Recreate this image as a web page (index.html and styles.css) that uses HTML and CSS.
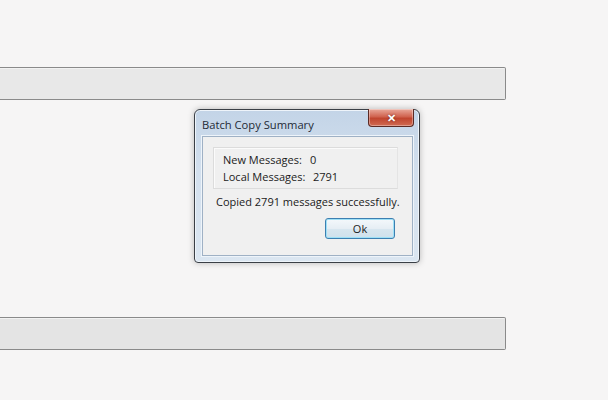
FILE: index.html
```html
<!DOCTYPE html>
<html lang="en">
<head>
    <meta charset="UTF-8">
    <title>Batch Copy Summary</title>
    <link rel="stylesheet" href="styles.css">
</head>
<body>

<div class="page">
    <div class="bar bar-top"></div>
    <div class="bar bar-bottom"></div>
</div>

<div class="window">
    <div class="titlebar">
        <span class="title">Batch Copy Summary</span>
        <button class="close-btn" type="button">&#x2715;</button>
    </div>
    <div class="client">
        <div class="groupbox">
            <div class="stat-row">
                <span class="stat-label">New Messages:</span>
                <span class="stat-value">0</span>
            </div>
            <div class="stat-row">
                <span class="stat-label">Local Messages:</span>
                <span class="stat-value">2791</span>
            </div>
        </div>
        <p class="result">Copied 2791 messages successfully.</p>
        <div class="actions">
            <button class="ok-btn" type="button">Ok</button>
        </div>
    </div>
</div>

</body>
</html>
```

FILE: styles.css
```css
body {
    margin: 0;
    padding: 0;
    background-color: #f6f5f5;
    font-family: "Open Sans", "Noto Sans", sans-serif;
    height: 400px;
    overflow: hidden;
}
.page {
    padding-top: 67px;
}
.bar {
    width: 505px;
    height: 31px;
    background-color: #e8e8e8;
    border: 1px solid #8a8a8a;
    border-left: none;
    border-radius: 0 2px 2px 0;
    box-shadow: inset 0 1px 0 #f2f2f2;
}
.bar-bottom {
    margin-top: 217px;
    background-color: #e4e4e4;
}
.window {
    position: absolute;
    left: 194px;
    top: 109px;
    width: 226px;
    height: 154px;
    background: linear-gradient(#c3d4e7, #d3e0ee 40%, #dbe6f1);
    border: 1px solid #3a3f46;
    border-radius: 6px 6px 4px 4px;
    box-shadow: 0 0 6px rgba(0, 0, 0, 0.25), inset 0 0 0 1px #eef4fa;
    box-sizing: border-box;
    display: flex;
    flex-direction: column;
}
.titlebar {
    height: 26px;
    display: flex;
    align-items: flex-start;
    justify-content: space-between;
    padding-left: 7px;
}
.title {
    font-size: 11.2px;
    color: #1e2a36;
    margin-top: 7px;
}
.close-btn {
    width: 46px;
    height: 18px;
    margin-right: 5px;
    margin-top: -1px;
    padding: 0;
    border: 1px solid #5b2a24;
    border-top: none;
    border-radius: 0 0 4px 4px;
    background: linear-gradient(#e9a99b, #d0634f 45%, #c0452f 55%, #d06b52);
    color: #ffffff;
    font-size: 11px;
    font-weight: bold;
    line-height: 16px;
    text-shadow: 0 0 2px #6b2015;
    box-shadow: inset 0 0 0 1px rgba(255, 255, 255, 0.35);
}
.client {
    margin: 0 6px 6px 7px;
    flex: 1;
    background-color: #f0f0f0;
    border: 1px solid #9fb1c5;
    box-shadow: 0 0 0 1px #eef4fa;
    padding: 10px 14px 0 10px;
    font-size: 11px;
    color: #1b1b1b;
}
.groupbox {
    border: 1px solid #dcdcdc;
    border-right-color: #e4e4e4;
    padding: 3px 0 3px 9px;
    box-shadow: inset 1px 1px 0 #fbfbfb;
}
.stat-row {
    display: grid;
    grid-template-columns: 87px auto;
    line-height: 17px;
}
.stat-row + .stat-row .stat-value {
    padding-left: 3px;
}
.result {
    margin: 5px 0 0 3px;
    line-height: 16px;
    white-space: nowrap;
}
.actions {
    display: flex;
    justify-content: flex-end;
    margin-top: 8px;
}
.ok-btn {
    width: 70px;
    height: 21px;
    margin-right: 3px;
    font-family: "Open Sans", "Noto Sans", sans-serif;
    font-size: 11px;
    color: #1b1b1b;
    background: linear-gradient(#f4f8fb, #e6eef4 50%, #d8e6ef 51%, #cfe1ec);
    border: 1px solid #3c7fb1;
    border-radius: 3px;
    box-shadow: inset 0 0 0 1px #9fe0f6;
    padding: 0;
}
```
